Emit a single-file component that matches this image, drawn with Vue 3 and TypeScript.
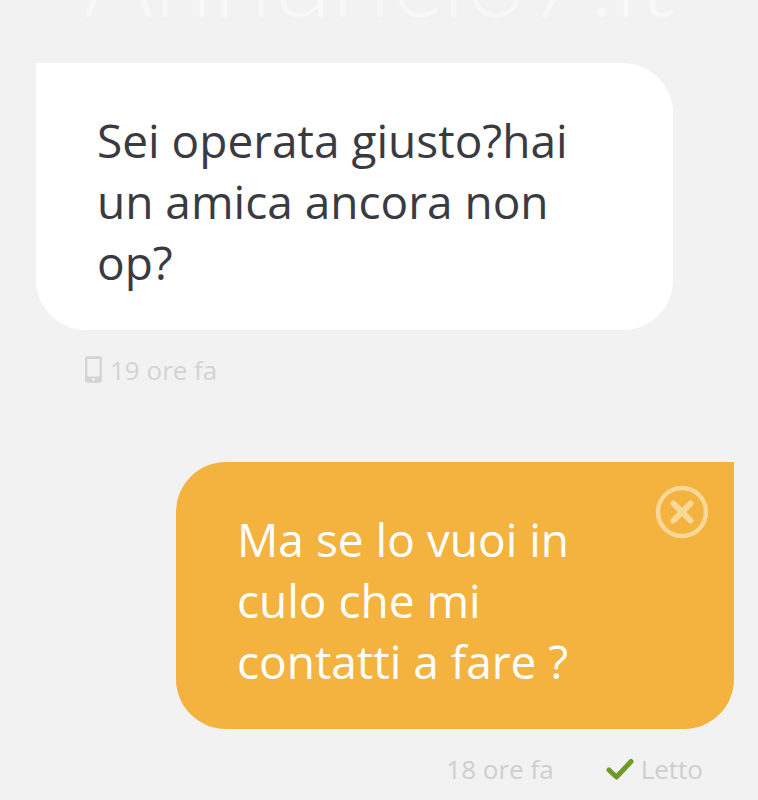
<script setup lang="ts">
interface Message {
  text: string;
  time: string;
  mine: boolean;
}

const messages: Message[] = [
  { text: 'Sei operata giusto?hai un amica ancora non op?', time: '19 ore fa', mine: false },
  { text: 'Ma se lo vuoi in culo che mi contatti a fare ?', time: '18 ore fa', mine: true }
];
</script>

<template>
  <div class="page">
    <div class="logo"><span>Annuncio7.it</span></div>
    <div v-for="(msg, index) in messages" :key="index" class="message" :class="{ mine: msg.mine }">
      <div class="bubble">
        <p>{{ msg.text }}</p>
        <svg v-if="msg.mine" class="close" viewBox="0 0 54 54" aria-hidden="true">
          <circle cx="27" cy="27" r="24" fill="none" stroke="#fad998" stroke-width="4.5" />
          <path d="M18.500 18.500 35.500 35.500M35.500 18.500 18.500 35.500" stroke="#fad998" stroke-width="6" stroke-linecap="round" />
        </svg>
      </div>
      <div class="meta">
        <svg v-if="!msg.mine" class="phone" viewBox="0 0 18 28" aria-hidden="true">
          <path fill-rule="evenodd" d="M3 0h12a3 3 0 0 1 3 3v22a3 3 0 0 1-3 3H3a3 3 0 0 1-3-3V3a3 3 0 0 1 3-3Zm-.5 3v18.500h13V3ZM9 22.700a1.700 1.700 0 1 0 0 3.400 1.700 1.700 0 0 0 0-3.400Z" fill="#d4d4d4" />
        </svg>
        <span>{{ msg.time }}</span>
        <span v-if="msg.mine" class="read">
          <svg class="check" viewBox="0 0 28 22" aria-hidden="true">
            <path d="M3 12 10.500 19 25 3.500" fill="none" stroke="#6f9a28" stroke-width="5" stroke-linecap="round" stroke-linejoin="round" />
          </svg>
          Letto
        </span>
      </div>
    </div>
  </div>
</template>

<style>
html,
body {
  background: #f2f2f2;
}
</style>

<style scoped>
.page {
  width: 758px;
  height: 800px;
  overflow: hidden;
  background: #f2f2f2;
  font-family: "Open Sans", "Liberation Sans", sans-serif;
}

.logo {
  height: 63px;
  overflow: hidden;
  text-align: center;
}

.logo span {
  display: block;
  margin-top: -90px;
  font-family: Lato, sans-serif;
  font-size: 108px;
  font-weight: 300;
  line-height: 130px;
  color: #f8f8f8;
  margin-right: 0;
}

.message {
  display: flex;
  flex-direction: column;
  align-items: flex-start;
  padding-left: 36px;
  margin-bottom: 73px;
}

.message.mine {
  align-items: flex-end;
  padding-left: 0;
  padding-right: 24px;
  margin-bottom: 0;
}

.bubble {
  position: relative;
  box-sizing: border-box;
  width: 637px;
  height: 267px;
  padding: 47px 60px 0 61px;
  border-radius: 0 50px 50px 50px;
  background: #fff;
  color: #3a3a42;
}

.mine .bubble {
  width: 558px;
  padding-right: 130px;
  border-radius: 50px 0 50px 50px;
  background: #f4b33f;
  color: #fff;
}

.bubble p {
  margin: 0;
  font-size: 46px;
  line-height: 61px;
}

.close {
  position: absolute;
  top: 23px;
  right: 25px;
  width: 54px;
  height: 54px;
}

.meta {
  display: flex;
  align-items: center;
  height: 39px;
  margin-top: 20px;
  padding-left: 49px;
  font-size: 26px;
  color: #d4d4d4;
}

.mine .meta {
  padding-left: 0;
  padding-right: 31px;
  margin-top: 20px;
  color: #cfcfcf;
}

.phone {
  width: 17px;
  height: 27px;
  margin-right: 8px;
}

.read {
  display: flex;
  align-items: center;
  margin-left: 52px;
}

.check {
  width: 28px;
  height: 22px;
  margin-right: 7px;
}
</style>
